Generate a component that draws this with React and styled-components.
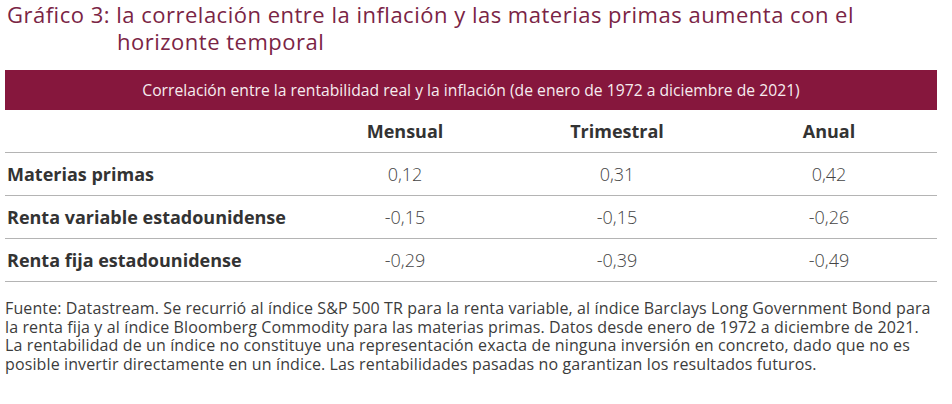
import React from "react";
import styled, { createGlobalStyle } from "styled-components";

const Global = createGlobalStyle`
  html, body { margin: 0; padding: 0; background: #fff; }
  body { font-family: "Open Sans", Lato, "Liberation Sans", sans-serif; }
`;

const Page = styled.div`
  width: 932px;
  padding: 0 0 0 5px;
`;

const Title = styled.h1`
  margin: 0;
  padding: 1px 0 0 112px;
  text-indent: -110px;
  font-size: 22px;
  line-height: 27px;
  letter-spacing: 0.5px;
  font-weight: 400;
  color: #7a2445;
  height: 70px;
  box-sizing: border-box;
`;

const Banner = styled.div`
  height: 40px;
  background: #86173d;
  color: #f6ecef;
  display: flex;
  align-items: center;
  justify-content: center;
  font-size: 15.7px;
  font-weight: 400;
`;

const Grid = styled.div`
  display: grid;
  grid-template-columns: 294px repeat(3, 212px) 1fr;
`;

const Row = styled.div`
  display: contents;
`;

const Cell = styled.div`
  height: 42px;
  border-bottom: 1.5px solid #b4b4b4;
  display: flex;
  align-items: center;
  justify-content: ${(p) => (p.$label ? "flex-start" : "center")};
  padding-left: ${(p) => (p.$label ? "2px" : "0")};
  font-size: 18px;
  font-weight: ${(p) => (p.$bold ? 700 : 300)};
  color: ${(p) => (p.$bold ? "#333" : "#444")};
`;

const Note = styled.p`
  margin: 17px 0 0 0;
  font-size: 16px;
  line-height: 18.7px;
  letter-spacing: 0.12px;
  color: #3c3c3c;
`;

const rows = [
  ["Materias primas", "0,12", "0,31", "0,42"],
  ["Renta variable estadounidense", "-0,15", "-0,15", "-0,26"],
  ["Renta fija estadounidense", "-0,29", "-0,39", "-0,49"],
];

export default function App() {
  return (
    <>
      <Global />
      <Page>
        <Title>
          Gráfico 3: la correlación entre la inflación y las materias primas aumenta con el
          <br />
          horizonte temporal
        </Title>
        <Banner>
          Correlación entre la rentabilidad real y la inflación (de enero de 1972 a diciembre de 2021)
        </Banner>
        <Grid>
          <Row>
            <Cell $label $bold />
            <Cell $bold>Mensual</Cell>
            <Cell $bold>Trimestral</Cell>
            <Cell $bold>Anual</Cell>
            <Cell />
          </Row>
          {rows.map((r) => (
            <Row key={r[0]}>
              <Cell $label $bold>{r[0]}</Cell>
              <Cell>{r[1]}</Cell>
              <Cell>{r[2]}</Cell>
              <Cell>{r[3]}</Cell>
              <Cell />
            </Row>
          ))}
        </Grid>
        <Note>
          Fuente: Datastream. Se recurrió al índice S&amp;P 500 TR para la renta variable, al índice Barclays Long Government Bond para
          <br />
          la renta fija y al índice Bloomberg Commodity para las materias primas. Datos desde enero de 1972 a diciembre de 2021.
          <br />
          La rentabilidad de un índice no constituye una representación exacta de ninguna inversión en concreto, dado que no es
          <br />
          posible invertir directamente en un índice. Las rentabilidades pasadas no garantizan los resultados futuros.
        </Note>
      </Page>
    </>
  );
}
